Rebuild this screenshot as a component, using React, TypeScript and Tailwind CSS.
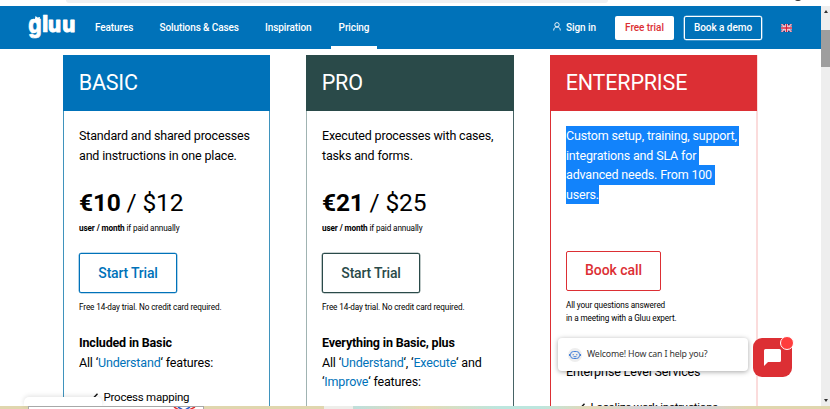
import React from 'react';

const navLinks = [
  { label: 'Features', className: 'w-[64.5px]' },
  { label: 'Solutions & Cases', className: 'w-[105.5px]' },
  { label: 'Inspiration', className: 'w-[74px]' },
];

// Gluu word mark
const Logo = () => (
  <svg width="50" height="34" viewBox="0 0 50 34" className="block shrink-0 overflow-visible" aria-label="gluu">
    <g fill="#fff" stroke="#fff" strokeWidth=".5" strokeLinejoin="round" className="font-['Inter'] text-[20.500px] font-extrabold tracking-normal">
      <text transform="translate(1.200 19.800) scale(1.020 1.200)">g</text>
      <text transform="translate(15 18.600) scale(1.100 1.150)">l</text>
      <text x="21 35.300" y="18.800" strokeWidth=".9">uu</text>
    </g>
    <path d="M7.500 8L8.500 3l2 1.500 2.500-.5-.5 4z" fill="#fff" />
  </svg>
);

const FlagUK = () => (
  <svg width="11" height="8" viewBox="0 0 11 8" className="block">
    <path fill="#26337a" d="M0 0h11v8H0z" />
    <path stroke="#fff" strokeWidth="1.6" d="M0 0l11 8M11 0L0 8" />
    <path stroke="#d8284a" strokeWidth=".7" d="M0 0l11 8M11 0L0 8" />
    <path stroke="#fff" strokeWidth="2.8" d="M5.5 0v8M0 4h11" />
    <path stroke="#d8203a" strokeWidth="1.5" d="M5.5 0v8M0 4h11" />
  </svg>
);

function Header() {
  return (
    <header className="flex h-[43px] w-full items-stretch bg-[#0072b9] text-[10px] font-medium tracking-[-0.050px] text-white">
      <div className="w-[95px] pt-[7px] pl-[27px]">
        <Logo />
      </div>
      <nav className="flex items-center whitespace-nowrap tracking-[-0.100px]">
        {navLinks.map((link) => (
          <a key={link.label} className={link.className}>{link.label}</a>
        ))}
        <a className="-ml-2 flex h-full w-[46px] items-center justify-center border-b-[3px] border-white pt-[3px]">Pricing</a>
      </nav>
      <div className="ml-auto flex items-center whitespace-nowrap pr-[29px]">
        <svg width="8" height="9" viewBox="0 0 8 9" fill="none" stroke="#fff" strokeWidth=".9" className="mr-[5px] -mt-0.5">
          <circle cx="4" cy="2.8" r="2.2" />
          <path d="M.7 8.5C.7 6 2 5 4 5s3.300 1 3.300 3.500" />
        </svg>
        <a className="w-[49px]">Sign in</a>
        <a className="flex h-6 w-[59px] items-center justify-center rounded-[2px] bg-white text-[#dc2f34]">Free trial</a>
        <a className="ml-[10px] mr-[19px] flex h-6 w-[78px] items-center justify-center rounded-[2px] border border-white shadow-[0_0_0_0.300px_white]">Book a demo</a>
        <FlagUK />
      </div>
    </header>
  );
}

interface PlanProps {
  title: string;
  frame: string;
  head: string;
  children: React.ReactNode;
}

function Plan({ title, frame, head, children }: PlanProps) {
  return (
    <section className={`shrink-0 ${frame}`}>
      <h2 className={`flex h-14 items-center pl-[15.700px] text-[21.500px] ${head} text-white`}>{title}</h2>
      <div className="pl-[15px] pt-[15px]">{children}</div>
    </section>
  );
}

interface OfferProps {
  euro: string;
  dollar: string;
  button: string;
}

// Price, call to action and trial note
function Offer({ euro, dollar, button }: OfferProps) {
  return (
    <>
      <div className="mt-[22px] flex h-[31px] items-center text-[24.500px] whitespace-pre">
        <b>{euro}</b> / {dollar}
      </div>
      <p className="h-4 text-[8.200px] tracking-[-0.120px] leading-[20px]"><b>user / month</b> if paid annually</p>
      <a className={`mt-[19px] flex h-10 w-[98px] items-center justify-center rounded-[2px] border pt-px text-[14px] font-medium tracking-[-0.200px] shadow-[0_0_0_0.300px_currentColor] ${button}`}>Start Trial</a>
      <p className="mt-[8px] mb-[20px] text-[8.200px] tracking-[-0.120px] leading-[12px]">Free 14-day trial. No credit card required.</p>
    </>
  );
}

const Check = () => (
  <svg width="10" height="8" viewBox="0 0 10 8" fill="none" stroke="#111" strokeWidth="1.400" className="mr-[5.500px]">
    <path d="M.5 4.500L3.500 7 9.500.8" />
  </svg>
);

const Term = ({ children }: { children: React.ReactNode }) => (
  <span className="text-[#0072b9]">{children}</span>
);

function ChatWidget() {
  return (
    <div className="absolute left-[558px] top-[337px] flex items-start">
      <div className="mt-px flex h-[33px] w-[190px] items-center rounded-[4px] bg-white pl-[10px] font-['Noto_Sans',sans-serif] text-[8.800px] tracking-[-0.170px] text-[#333] shadow-[0_1px_5px_rgba(0,0,0,0.35)]">
        <span className="mr-[5px] flex size-[14px] items-center justify-center rounded-full bg-[#eeeeee]">
          <svg width="12" height="10" viewBox="0 0 12 10" fill="none" stroke="#3375d6" strokeWidth=".9">
            <rect x="1.500" y="1.500" width="9" height="7" rx="3" />
            <path d="M.5 4v2M11.500 4v2M4.200 4v1.300M7.800 4v1.300M4.500 6.700h3" />
          </svg>
        </span>
        Welcome! How can I help you?
      </div>
      <div className="relative ml-[4.500px] mt-px flex size-[39px] items-center justify-center rounded-[9px] bg-[#dc2f34]">
        <svg width="17" height="17" viewBox="0 0 17 17" fill="#fff">
          <path d="M1.500 0h14A1.500 1.500 0 0 1 17 1.500v10a1.500 1.500 0 0 1-1.500 1.500H4L0 17V1.500A1.500 1.500 0 0 1 1.500 0z" />
        </svg>
        <span className="absolute -right-[2px] -top-[2px] size-[14px] rounded-full border border-white bg-[#ff3d3d]" />
      </div>
    </div>
  );
}

export default function App() {
  return (
    <div className="relative flex h-[409px] w-[830px] flex-col overflow-hidden bg-white font-['Roboto',sans-serif] text-black">
      <div className="relative h-[6px] shrink-0">
        <div className="ml-[66px] h-[3px] w-[542px] rounded-b-[4px] bg-[#eff0f2]" />
        <div className="absolute left-[794px] top-[-7px] size-[8px] rounded-full bg-[#333]" />
      </div>
      <div className="flex h-[400px] shrink-0">
        <div className="flex w-[821px] flex-col">
          <Header />
          <main className="flex h-[357px] gap-[36px] overflow-hidden pl-[63px] pt-[6px] text-[12.500px] leading-[19.500px] tracking-[-0.170px] whitespace-nowrap">
            <Plan title="BASIC" frame="w-[207px] border-x border-[#3f93bd]" head="-mx-px bg-[#0072b9]">
              <p>Standard and shared processes<br />and instructions in one place.</p>
              <Offer euro="€10" dollar="$12" button="border-[#0072b9] text-[#0072b9]" />
              <b>Included in Basic</b>
              <p>All ‘<Term>Understand</Term>‘ features:</p>
              <p className="mt-[15.500px] flex items-center pl-[9px] text-[11.500px] tracking-[-0.230px]"><Check />Process mapping</p>
            </Plan>
            <Plan title="PRO" frame="w-[208px] border-x border-l-[#a0b3b2] border-r-[#466365]" head="-mx-px bg-[#2a4a49]">
              <p>Executed processes with cases,<br />tasks and forms.</p>
              <Offer euro="€21" dollar="$25" button="border-[#2a4a49] text-[#2a4a49]" />
              <b>Everything in Basic, plus</b>
              <p>All ‘<Term>Understand</Term>‘, ‘<Term>Execute</Term>‘ and<br />‘<Term>Improve</Term>‘ features:</p>
            </Plan>
            <Plan title="ENTERPRISE" frame="w-[208px] border-l border-r-2 border-l-[#dc2f34] border-r-[#fbdcdc]" head="-mx-px bg-[#dc2f34]">
              <div className="flex flex-col items-start text-white">
                <span className="bg-[#1283fb] pr-[2.500px]">Custom setup, training, support,</span>
                <span className="bg-[#1283fb] pr-[3px]">integrations and SLA for</span>
                <span className="bg-[#1283fb] pr-[3px]">advanced needs. From 100</span>
                <span className="bg-[#1283fb]">users.</span>
              </div>
              <a className="mt-[47px] flex h-10 w-[95px] items-center justify-center rounded-[2px] border border-[#dc2f34] text-[14px] font-medium tracking-[-0.050px] text-[#dc2f34]">Book call</a>
              <p className="mt-[7.500px] text-[8.200px] tracking-[-0.120px] leading-[13px]">All your questions answered<br />in a meeting with a Gluu expert.</p>
              <p className="mt-[37.500px]">Enterprise Level Services</p>
              <p className="mt-[16px] flex items-center pl-[9px] text-[11.500px] tracking-[-0.230px]"><Check />Localize work instructions</p>
            </Plan>
          </main>
        </div>
        {/* Browser scrollbar */}
        <div className="flex w-[9px] flex-col items-center bg-[#eeeeee]">
          <div className="mt-[4px] border-x-[2.500px] border-b-[3px] border-x-transparent border-b-[#333]" />
          <div className="mt-[17px] h-[37px] w-full bg-[#9e9e9e]" />
          <div className="mt-auto mb-[4px] border-x-[2.500px] border-t-[3px] border-x-transparent border-t-[#333]" />
        </div>
      </div>
      <div className="h-[3px] shrink-0 bg-[linear-gradient(90deg,#e0d6ae_0%,#e0d6ae_39%,#bfdfdb_43%,#e6dab4_51%,#bde6de_60%,#bde6de_65%,#e3d8b8_71%,#d4d2d4_77%,#d4d2d4_85%,#e0d6ae_90%)]" />
      <ChatWidget />
      {/* Browser status popup and the desktop peeking out under the window */}
      <div className="absolute left-[24px] top-[397px] h-[9px] w-[78px] rounded-t-[5px] bg-white shadow-[0_-1px_5px_rgba(0,0,0,0.12)]" />
      <div className="absolute left-[28px] top-[406px] flex h-[3px] w-[176px] justify-end border border-b-0 border-[#a8a8a8] bg-white pr-[6px]">
        <svg width="24" height="3" viewBox="0 0 24 3" fill="none" strokeWidth="1.500">
          <path stroke="#e03030" d="M1 0l5 3M22 0l-6 3" />
          <path stroke="#2858c8" d="M5 0l5 3M17 0l-5 3" />
        </svg>
      </div>
      <div className="absolute left-[324px] top-[406px] h-[3px] w-[29px] bg-[#eeeeea]" />
    </div>
  );
}
